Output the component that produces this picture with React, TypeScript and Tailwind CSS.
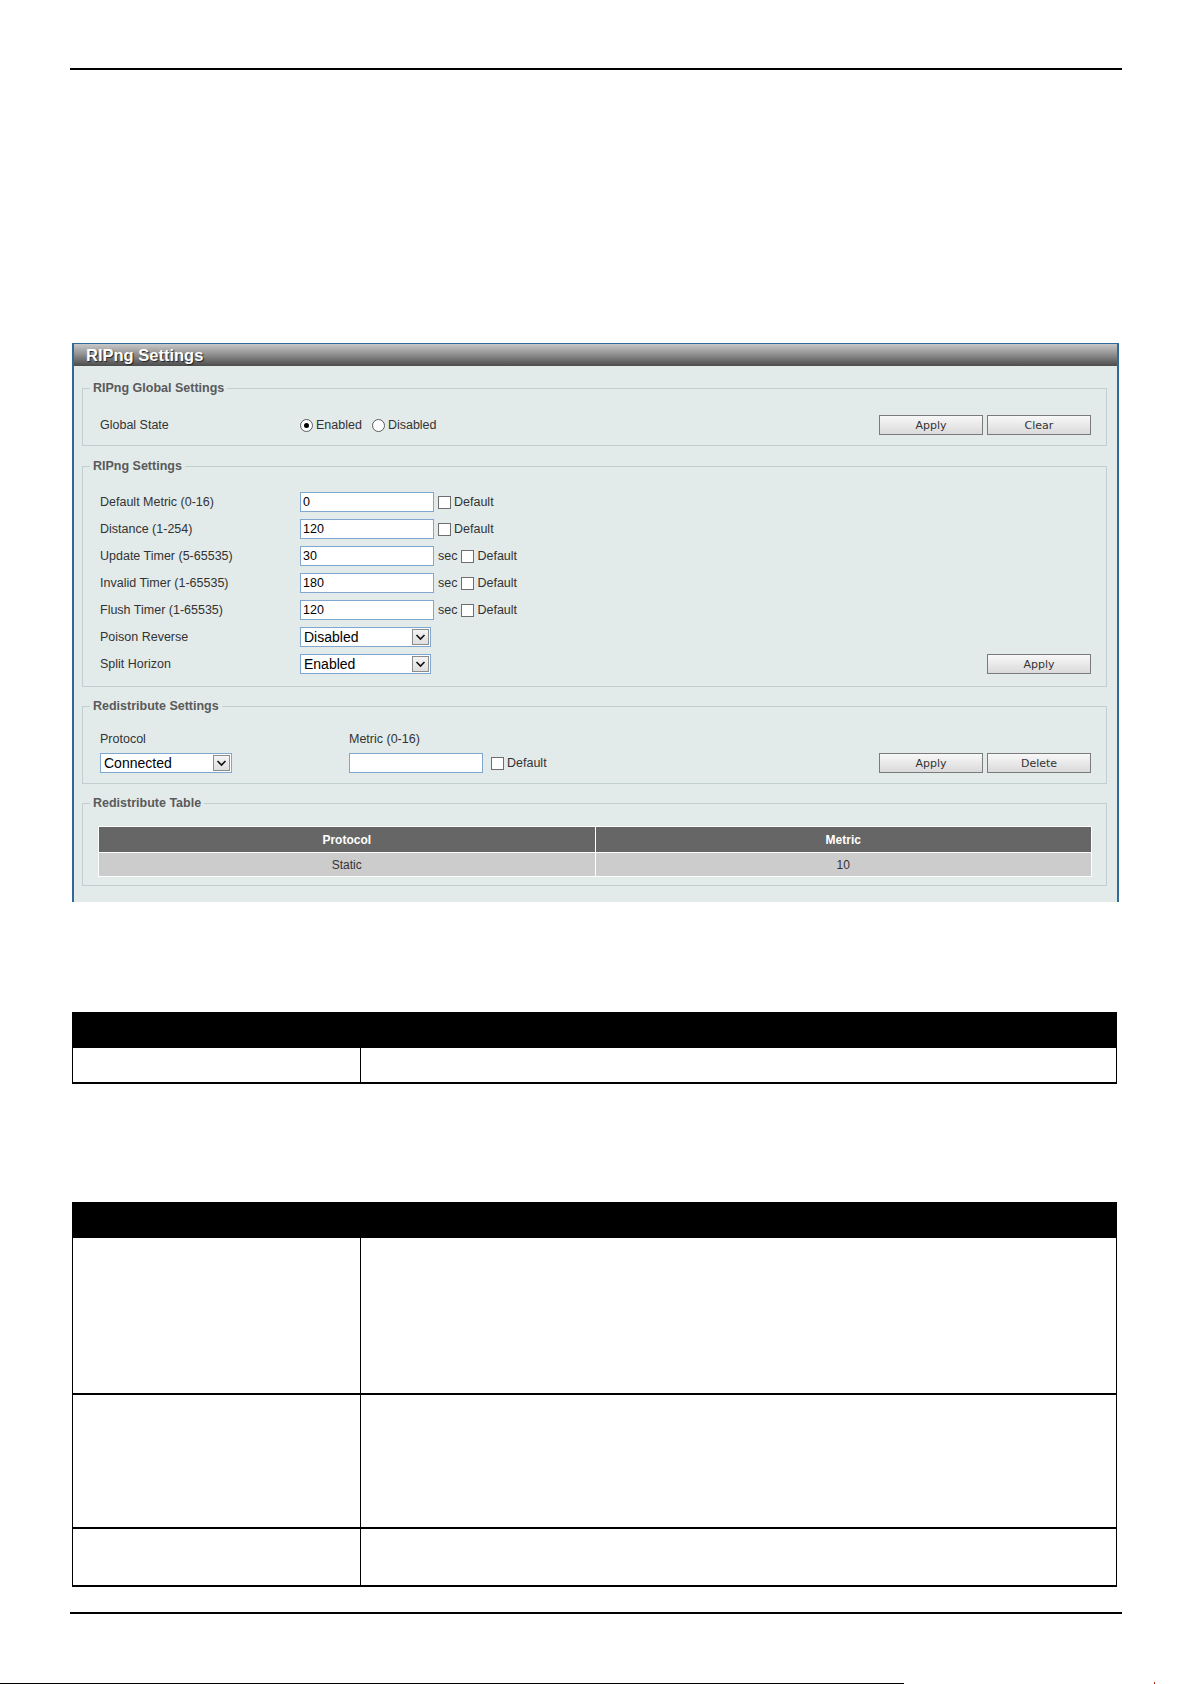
import React from "react";

const arial = "font-['Liberation_Sans',Arial,sans-serif]";
const tahoma = "font-['DejaVu_Sans',Verdana,sans-serif]";

const timerRows = [
  { label: "Default Metric (0-16)", value: "0", sec: false },
  { label: "Distance (1-254)", value: "120", sec: false },
  { label: "Update Timer (5-65535)", value: "30", sec: true },
  { label: "Invalid Timer (1-65535)", value: "180", sec: true },
  { label: "Flush Timer (1-65535)", value: "120", sec: true },
];

const Button = ({ label }: { label: string }) => (
  <button
    className={`h-[20px] w-[104px] border border-[#7b7b7b] bg-linear-to-b from-[#f8f8f8] to-[#dadada] text-[11px] leading-none text-[#333] ${tahoma}`}
  >
    {label}
  </button>
);

const Radio = ({ checked }: { checked?: boolean }) => (
  <span className="flex h-[13px] w-[13px] items-center justify-center rounded-full border border-[#5c5c5c] bg-white">
    {checked && <span className="h-[5px] w-[5px] rounded-full bg-black" />}
  </span>
);

const Check = () => (
  <span className="inline-block h-[13px] w-[13px] border border-[#6e6e6e] bg-white" />
);

const TextBox = ({ value, w = "w-[134px]" }: { value: string; w?: string }) => (
  <input
    readOnly
    value={value}
    className={`h-[20px] ${w} border border-[#7fa7cf] bg-white pl-[2px] text-[12.5px] text-black outline-none ${arial}`}
  />
);

const DropDown = ({ value, w = "w-[131px]" }: { value: string; w?: string }) => (
  <div
    className={`flex h-[20px] ${w} items-center border border-[#7fa7cf] bg-white pl-[3px] pr-[1px]`}
  >
    <span className="text-[14px] leading-none text-black">{value}</span>
    <span className="ml-auto flex h-[16px] w-[17px] items-center justify-center border border-[#8c8c8c] bg-linear-to-b from-[#f4f4f4] to-[#dedede]">
      <svg width="11" height="8" viewBox="0 0 11 8">
        <path d="M1.5 2 L5.5 6 L9.5 2" fill="none" stroke="#111" strokeWidth="1.6" />
      </svg>
    </span>
  </div>
);

const Group = ({
  title,
  children,
  className = "",
}: {
  title: string;
  children: React.ReactNode;
  className?: string;
}) => (
  <fieldset className={`border border-[#c2cfd0] ${className}`}>
    <legend className="ml-[7px] px-[3px] text-[12.5px] font-bold leading-[14px] text-[#5a5a5a]">
      {title}
    </legend>
    {children}
  </fieldset>
);

const DocTable = ({ rows }: { rows: number[] }) => (
  <div className="ml-[2px] w-[1045px]">
    <div className="h-[36px] bg-black" />
    {rows.map((h, i) => (
      <div
        key={i}
        className="flex border-x border-b-2 border-black"
        style={{ height: h }}
      >
        <div className="w-[288px] border-r border-black" />
        <div className="flex-1" />
      </div>
    ))}
  </div>
);

export default function App() {
  return (
    <div className={`relative h-[1684px] w-[1192px] overflow-hidden bg-white ${arial}`}>
      <div className="pl-[70px]">
        <div className="mt-[68px] h-[2px] w-[1052px] bg-black" />

        {/* settings panel */}
        <div className="ml-[2px] mt-[273px] w-[1047px] border-x-2 border-t border-[#2f6a9b]">
          <div className="flex h-[22px] items-center bg-linear-to-b from-[#c8c8c8] via-[#8d8d8d] to-[#4c4c4c] pl-[12px]">
            <span className="text-[16.5px] font-bold leading-none text-white [text-shadow:1px_1px_1px_#222]">
              RIPng Settings
            </span>
          </div>

          <div className="bg-[#e2eaea] pb-[16px] pl-[8px] pr-[10px] pt-[15px] text-[12.5px] text-[#333]">
            <Group title="RIPng Global Settings">
              <div className="mb-[10px] mt-[20px] flex h-[20px] items-center pl-[17px] pr-[15px]">
                <span className="w-[200px]">Global State</span>
                <Radio checked />
                <span className="ml-[3px]">Enabled</span>
                <span className="ml-[10px]">
                  <Radio />
                </span>
                <span className="ml-[3px]">Disabled</span>
                <div className="ml-auto flex gap-[4px]">
                  <Button label="Apply" />
                  <Button label="Clear" />
                </div>
              </div>
            </Group>

            <Group title="RIPng Settings" className="mt-[13px]">
              <div className="flex flex-col gap-[7px] pb-[12px] pl-[17px] pr-[15px] pt-[19px]">
                {timerRows.map((r) => (
                  <div key={r.label} className="flex h-[20px] items-center">
                    <span className="w-[200px]">{r.label}</span>
                    <TextBox value={r.value} />
                    {r.sec && <span className="ml-[4px]">sec</span>}
                    <span className="ml-[4px] flex">
                      <Check />
                    </span>
                    <span className="ml-[3px]">Default</span>
                  </div>
                ))}
                <div className="flex h-[20px] items-center">
                  <span className="w-[200px]">Poison Reverse</span>
                  <DropDown value="Disabled" />
                </div>
                <div className="flex h-[20px] items-center">
                  <span className="w-[200px]">Split Horizon</span>
                  <DropDown value="Enabled" />
                  <div className="ml-auto">
                    <Button label="Apply" />
                  </div>
                </div>
              </div>
            </Group>

            <Group title="Redistribute Settings" className="mt-[12px]">
              <div className="flex items-end pb-[10px] pl-[17px] pr-[15px] pt-[19px]">
                <div className="flex w-[249px] flex-col gap-[7px]">
                  <span className="leading-[14px]">Protocol</span>
                  <DropDown value="Connected" w="w-[132px]" />
                </div>
                <div className="flex flex-col gap-[7px]">
                  <span className="leading-[14px]">Metric (0-16)</span>
                  <div className="flex h-[20px] items-center">
                    <TextBox value="" />
                    <span className="ml-[8px] flex">
                      <Check />
                    </span>
                    <span className="ml-[3px]">Default</span>
                  </div>
                </div>
                <div className="ml-auto flex gap-[4px]">
                  <Button label="Apply" />
                  <Button label="Delete" />
                </div>
              </div>
            </Group>

            <Group title="Redistribute Table" className="mt-[12px]">
              <div className="pb-[8px] pl-[15px] pr-[14px] pt-[16px] text-[12px]">
                <div className="border border-white">
                  <div className="flex h-[25px] text-white">
                    <div className="flex flex-1 items-center justify-center border-r border-white bg-[#666] font-bold">
                      Protocol
                    </div>
                    <div className="flex flex-1 items-center justify-center bg-[#666] font-bold">
                      Metric
                    </div>
                  </div>
                  <div className="flex h-[24px] border-t border-white">
                    <div className="flex flex-1 items-center justify-center border-r border-white bg-[#cccccc]">
                      Static
                    </div>
                    <div className="flex flex-1 items-center justify-center bg-[#cccccc]">
                      10
                    </div>
                  </div>
                </div>
              </div>
            </Group>
          </div>
        </div>

        <div className="mt-[110px]">
          <DocTable rows={[36]} />
        </div>
        <div className="mt-[118px]">
          <DocTable rows={[157, 134, 58]} />
        </div>

        <div className="mt-[25px] h-[2px] w-[1052px] bg-black" />
      </div>

      {/* page edge */}
      <div className="mt-[68px] flex items-end">
        <div className="h-px w-[904px] bg-black" />
        <div className="ml-[250px] h-[2px] w-px bg-[#b22]" />
      </div>
    </div>
  );
}
